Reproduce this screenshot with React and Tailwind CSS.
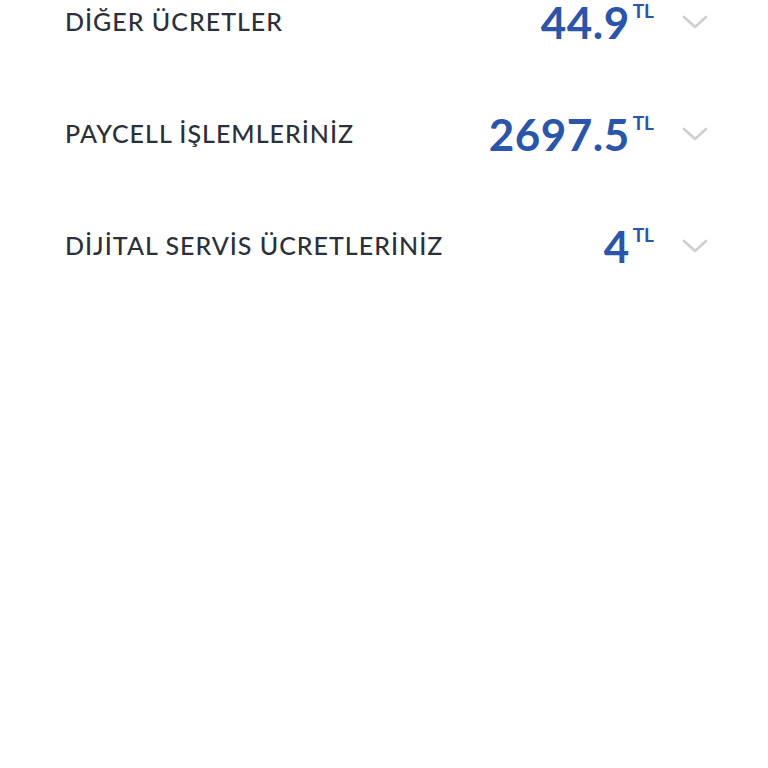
import React from "react";

const rows = [
  { label: "DİĞER ÜCRETLER", value: "44.9" },
  { label: "PAYCELL İŞLEMLERİNİZ", value: "2697.5" },
  { label: "DİJİTAL SERVİS ÜCRETLERİNİZ", value: "4" },
];

function Chevron() {
  return (
    <svg width="26" height="16" viewBox="0 0 26 16" fill="none">
      <path d="M2 3 L13 13 L24 3" stroke="#cfcfcf" strokeWidth="2.6" strokeLinecap="round" strokeLinejoin="round" />
    </svg>
  );
}

export default function App() {
  return (
    <div className="w-[768px] h-[768px] bg-white overflow-hidden" style={{ fontFamily: "Lato, 'Noto Sans', sans-serif" }}>
      <div className="-mt-[34px] pl-[65px] pr-[60px]">
        {rows.map((r) => (
          <div key={r.label} className="h-[112px] flex items-center justify-between">
            <span className="text-[25px] font-medium tracking-[1px] text-[#2b303b]">{r.label}</span>
            <div className="flex items-center">
              <div className="flex items-start">
                <span className="text-[44px] font-bold leading-none text-[#2a55a8] tracking-[0.5px]">{r.value}</span>
                <span className="ml-[3px] mt-[1px] text-[19px] font-bold leading-none text-[#2a55a8]">TL</span>
              </div>
              <div className="ml-[28px] -mt-[1px]">
                <Chevron />
              </div>
            </div>
          </div>
        ))}
      </div>
    </div>
  );
}
